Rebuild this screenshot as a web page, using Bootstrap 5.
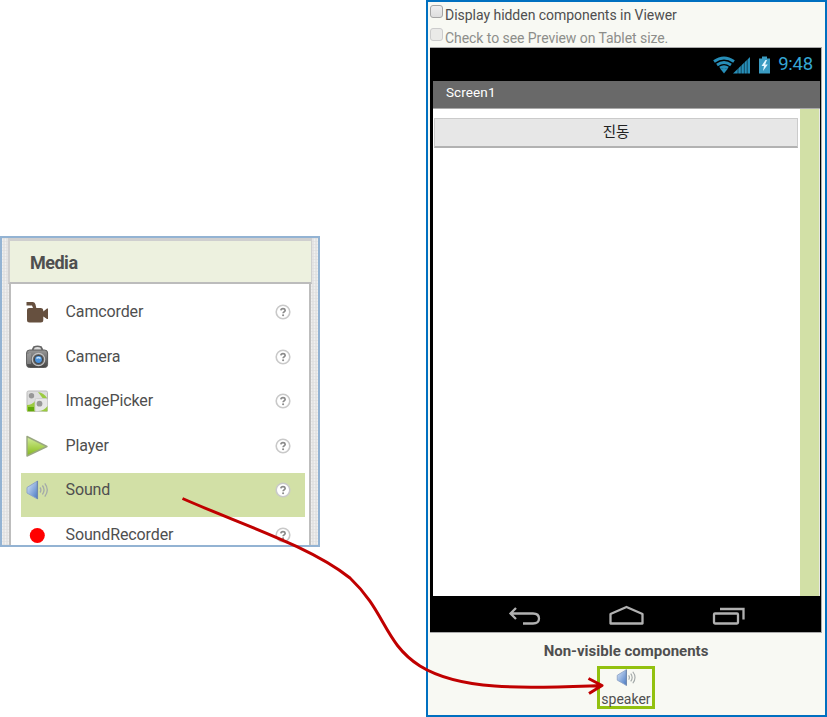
<!DOCTYPE html>
<html lang="ko">
<head>
<meta charset="utf-8">
<meta name="viewport" content="width=device-width, initial-scale=1">
<title>Screen1</title>
<link href="https://cdn.jsdelivr.net/npm/bootstrap@5.3.0/dist/css/bootstrap.min.css" rel="stylesheet">
<style>
body{font-family:Roboto,"Noto Sans CJK KR",sans-serif;color:#4f4f4f;line-height:1}
.board{width:827px;height:717px}
.palette{width:320px;height:311px;margin-top:236px;border:2px solid #93b3d3;padding:0 7px 0 6px;background-color:#e6e6e6;background-image:repeating-linear-gradient(0deg,#dcdcdc88 0 1px,transparent 1px 3px),repeating-linear-gradient(90deg,#efefef 0 1px,#e4e4e4 1px 3px)}
.palette-head{height:47px;margin:-1px -1px 0 0;padding:3px 0 0 20px;background:#edf1df;border:solid #cfcfcf;border-width:4px 1px 2px 2px;border-bottom-color:#bcbcbc;font-size:18px;letter-spacing:-.5px}
.palette-list{height:300px;background:#fff;border:solid #bdbdbd;border-width:0 2px;margin:0 0 0 1px;padding:11px 4.500px 0 10px}
.item{height:44px;margin-bottom:.5px;padding:0 13.500px 10px 4px;font-size:16px;letter-spacing:-.12px}
.item.chosen{background:#d2e0a6}
.item>span{margin-left:16.500px}
.designer{width:401px;height:717px;border:2px solid #0070c0;background:#f8f9f3;padding:0 3px 0 2px}
.opt{height:23px;font-size:14px;letter-spacing:-.03px;padding-top:2px}
.opt i{width:13px;height:13px;border:1px solid #a5a5a5;border-radius:3px;background:linear-gradient(#eee,#dedede);margin:1px 2px 0 0}
.opt.off{color:#8d8e8a;letter-spacing:-.06px}.opt.off i{border-color:#ccc;background:#eaeae8}
.phone{width:392px;height:586px;background:#000;margin-top:-1px;border:1px solid #aaa;border-width:1px 1px 1px 0;padding:0 1px 0 3px}
.status{height:33px;color:#35a5d3;font-size:18.500px;padding-right:7px;letter-spacing:-.2px}
.titlebar{height:28px;background:#696969;border-bottom:1px solid #aaa;color:#fff;font-size:13.500px;padding:0 0 3px 13px;letter-spacing:.1px}
.canvas{height:487px}
.canvas>div:first-child{width:367px;padding:9px 2px 0 1px}
.gutter{width:20px;background:#d2e0a6;border-right:1px solid #e8e8e8}
.vib{height:30px;background:#e7e7e7;border:1px solid #cbcbcb;border-bottom:2px solid #b2b2b2;color:#222;font-size:14.500px;padding-top:2px}
.nonvis{font-size:15px;font-weight:700;margin-top:10.500px;height:22.500px}
.speaker{width:58px;height:43px;border:3px solid #92c10f;font-size:14px;margin-left:2px}
.speaker svg{margin-top:-2px}
.arrow{left:0;top:0}
</style>
<script src="https://cdn.jsdelivr.net/npm/bootstrap@5.3.0/dist/js/bootstrap.bundle.min.js"></script>
</head>
<body class="m-0 bg-white overflow-hidden">
<svg width="0" height="0" class="position-absolute">
<defs>
<linearGradient id="gn" x2="0" y2="1"><stop stop-color="#d4eda0"/><stop offset=".55" stop-color="#a9d252"/><stop offset="1" stop-color="#83b61f"/></linearGradient>
<linearGradient id="bl" x2="1" y2="1"><stop stop-color="#dce9f9"/><stop offset="1" stop-color="#4678c4"/></linearGradient>
<linearGradient id="gy" x2="0" y2="1"><stop stop-color="#999"/><stop offset="1" stop-color="#444"/></linearGradient>
<symbol id="help" viewBox="0 0 16 16"><circle cx="8" cy="8" r="6.8" fill="#fff" stroke="#c9c9c9" stroke-width="1.6"/><path d="M5.9 6.4Q6 4.7 8 4.7T10.2 6.3Q10.2 7.3 9 7.9 8.1 8.4 8.1 9.3" fill="none" stroke="#8b8b8b" stroke-width="1.7"/><circle cx="8.1" cy="11.3" r="1.05" fill="#8b8b8b"/></symbol>
<symbol id="snd" viewBox="0 0 24 24"><path d="M2 9.500 12.500 3v18L2 15Z" fill="url(#bl)" stroke="#8fa5c8"/><path d="M12.400 3v18" stroke="#7088ac" stroke-width="1.300"/><path d="M15 9.500q1.800 2.500 0 5M17.400 7.500q3.300 4.500 0 9M19.800 5.400q5 6.600 0 13.200" fill="none" stroke="#a3a9a9" stroke-width="1.300"/></symbol>
</defs></svg>
<div class="board d-flex position-relative">
<aside class="palette overflow-hidden flex-shrink-0">
<div class="palette-head d-flex align-items-center fw-bold">Media</div>
<div class="palette-list">
<div class="item d-flex align-items-center"><svg width="24" height="24" viewBox="0 0 24 24"><path d="M1.500 2H8q2 0 2.500 2.500L11.300 8H16q2.300 0 2.300 2.500v1L22 8.500h1V19h-1l-3.700-2.500V20q0 2.500-2.500 2.500H4.500Q2 22.500 2 20V10q0-2 2-2h4L7 5.500H1.500Z" fill="#66503f"/></svg><span>Camcorder</span><svg class="ms-auto" width="16" height="16"><use href="#help"/></svg></div>
<div class="item d-flex align-items-center"><svg width="24" height="24" viewBox="0 0 24 24"><path d="M7.500 5 9 2q3.500-1.500 7 0l1.500 3" fill="#ddd" stroke="#666" stroke-width="1.700"/><rect x="1.600" y="5" width="21" height="17.500" rx="3" fill="url(#gy)" stroke="#5b5b5b"/><path d="M3 9v10M5 8v11" stroke="#aaa"/><circle cx="13.500" cy="14.500" r="6.200" fill="#666" stroke="#c5c5c5" stroke-width="1.200"/><circle cx="13.500" cy="14.500" r="4" fill="#4b93dc" stroke="#444" stroke-width="1.100"/><path d="M11.500 13.500q2-2 4 0" stroke="#c4e4ff" stroke-width="1.500" fill="none"/></svg><span>Camera</span><svg class="ms-auto" width="16" height="16"><use href="#help"/></svg></div>
<div class="item d-flex align-items-center"><svg width="24" height="24" viewBox="0 0 24 24"><rect x="2" y="2" width="20.500" height="20.500" rx="1.500" fill="#dedede" stroke="#bbb"/><path d="M2 16q5 0 8-4v10.500H2ZM13 3q6 1 9 6V11h-3Z" fill="#9bcb41"/><path d="M3 18h6v4H3Z" fill="#62a90c"/><rect x="10" y="9.500" width="12.500" height="13" rx="1.500" fill="#e7e7e7" stroke="#ccc" stroke-width=".8"/><path d="M13 22q6 0 9.500-5v5.500Z" fill="#9bcb41"/><circle cx="6.500" cy="6.800" r="2.700" fill="#979797"/><circle cx="14.500" cy="14.700" r="2.900" fill="#979797"/></svg><span>ImagePicker</span><svg class="ms-auto" width="16" height="16"><use href="#help"/></svg></div>
<div class="item d-flex align-items-center"><svg width="24" height="24" viewBox="0 0 24 24"><path d="M2 2.500 22 12.500 2 22Z" fill="url(#gn)" stroke="#9aa880" stroke-width="1.400" stroke-linejoin="round"/></svg><span>Player</span><svg class="ms-auto" width="16" height="16"><use href="#help"/></svg></div>
<div class="item chosen d-flex align-items-center"><svg width="24" height="24"><use href="#snd"/></svg><span>Sound</span><svg class="ms-auto" width="16" height="16"><use href="#help"/></svg></div>
<div class="item d-flex align-items-center"><svg width="24" height="24" viewBox="0 0 24 24"><circle cx="12.300" cy="12.500" r="7.500" fill="#f00"/></svg><span>SoundRecorder</span><svg class="ms-auto" width="16" height="16"><use href="#help"/></svg></div>
</div>
</aside>
<main class="designer ms-auto flex-shrink-0">
<div class="opt d-flex"><i></i><span class="pt-1">Display hidden components in Viewer</span></div>
<div class="opt off d-flex"><i></i><span class="pt-1">Check to see Preview on Tablet size.</span></div>
<section class="phone">
<div class="status d-flex align-items-center justify-content-end">
<svg width="62" height="22" viewBox="0 0 62 22"><g fill="none" stroke="#278eb8" stroke-width="2.800"><path d="M2 7.500q10-7 20 0M5 11q7-5 14 0M8 14q4-2.600 8 0"/></g><path d="M8.500 15q3.500-2 7 0L12 19.500Z" fill="#278eb8"/><path d="M21 19.500 38 3v16.500Z" fill="#278eb8"/><path d="M26 4v16M29.200 4v16M32.300 4v16M35.200 4v16" stroke="#000" stroke-opacity=".55" stroke-width=".9"/><path d="M47 4.500H50V2.500h5v2h3v15H47Z" fill="#3a9bc2"/><path d="M53.500 6 49.500 12h2.500l-1 5 4.800-6.500h-2.700L55 6Z" fill="#e6f7ff"/></svg><span class="ms-1">9:48</span></div>
<div class="titlebar d-flex align-items-center">Screen1</div>
<div class="canvas d-flex bg-white"><div><div class="vib d-flex align-items-center justify-content-center">진동</div></div><div class="gutter"></div></div>
<div class="d-flex justify-content-center"><svg width="240" height="36" viewBox="0 0 240 36" fill="none" stroke="#b1b1b1" stroke-width="2.300"><path d="M9 12 3.500 17.500 9 23M4 17.500H26q6 0 6 5t-6 5H16"/><path d="M103.500 27.500V18L119.500 11l16 7v9.500Z" stroke-linejoin="round"/><rect x="207" y="17.500" width="24" height="10" rx="1"/><path d="M213 13h23.500v10.500"/></svg></div>
</section>
<div class="nonvis text-center">Non-visible components</div>
<div class="speaker mx-auto d-flex flex-column align-items-center"><svg width="22" height="22"><use href="#snd"/></svg><span class="pt-1">speaker</span></div>
</main>
<svg class="arrow position-absolute" width="827" height="717" fill="none" stroke="#c00000" stroke-width="3"><path d="M182.500 498.500C240 524 310 546 350 578C386 612 384 643 420 666C462 692 530 688 601 685.500M588.500 678.500 602 685.500 589 693.500" stroke-linejoin="round"/></svg>
</div>
</body>
</html>
